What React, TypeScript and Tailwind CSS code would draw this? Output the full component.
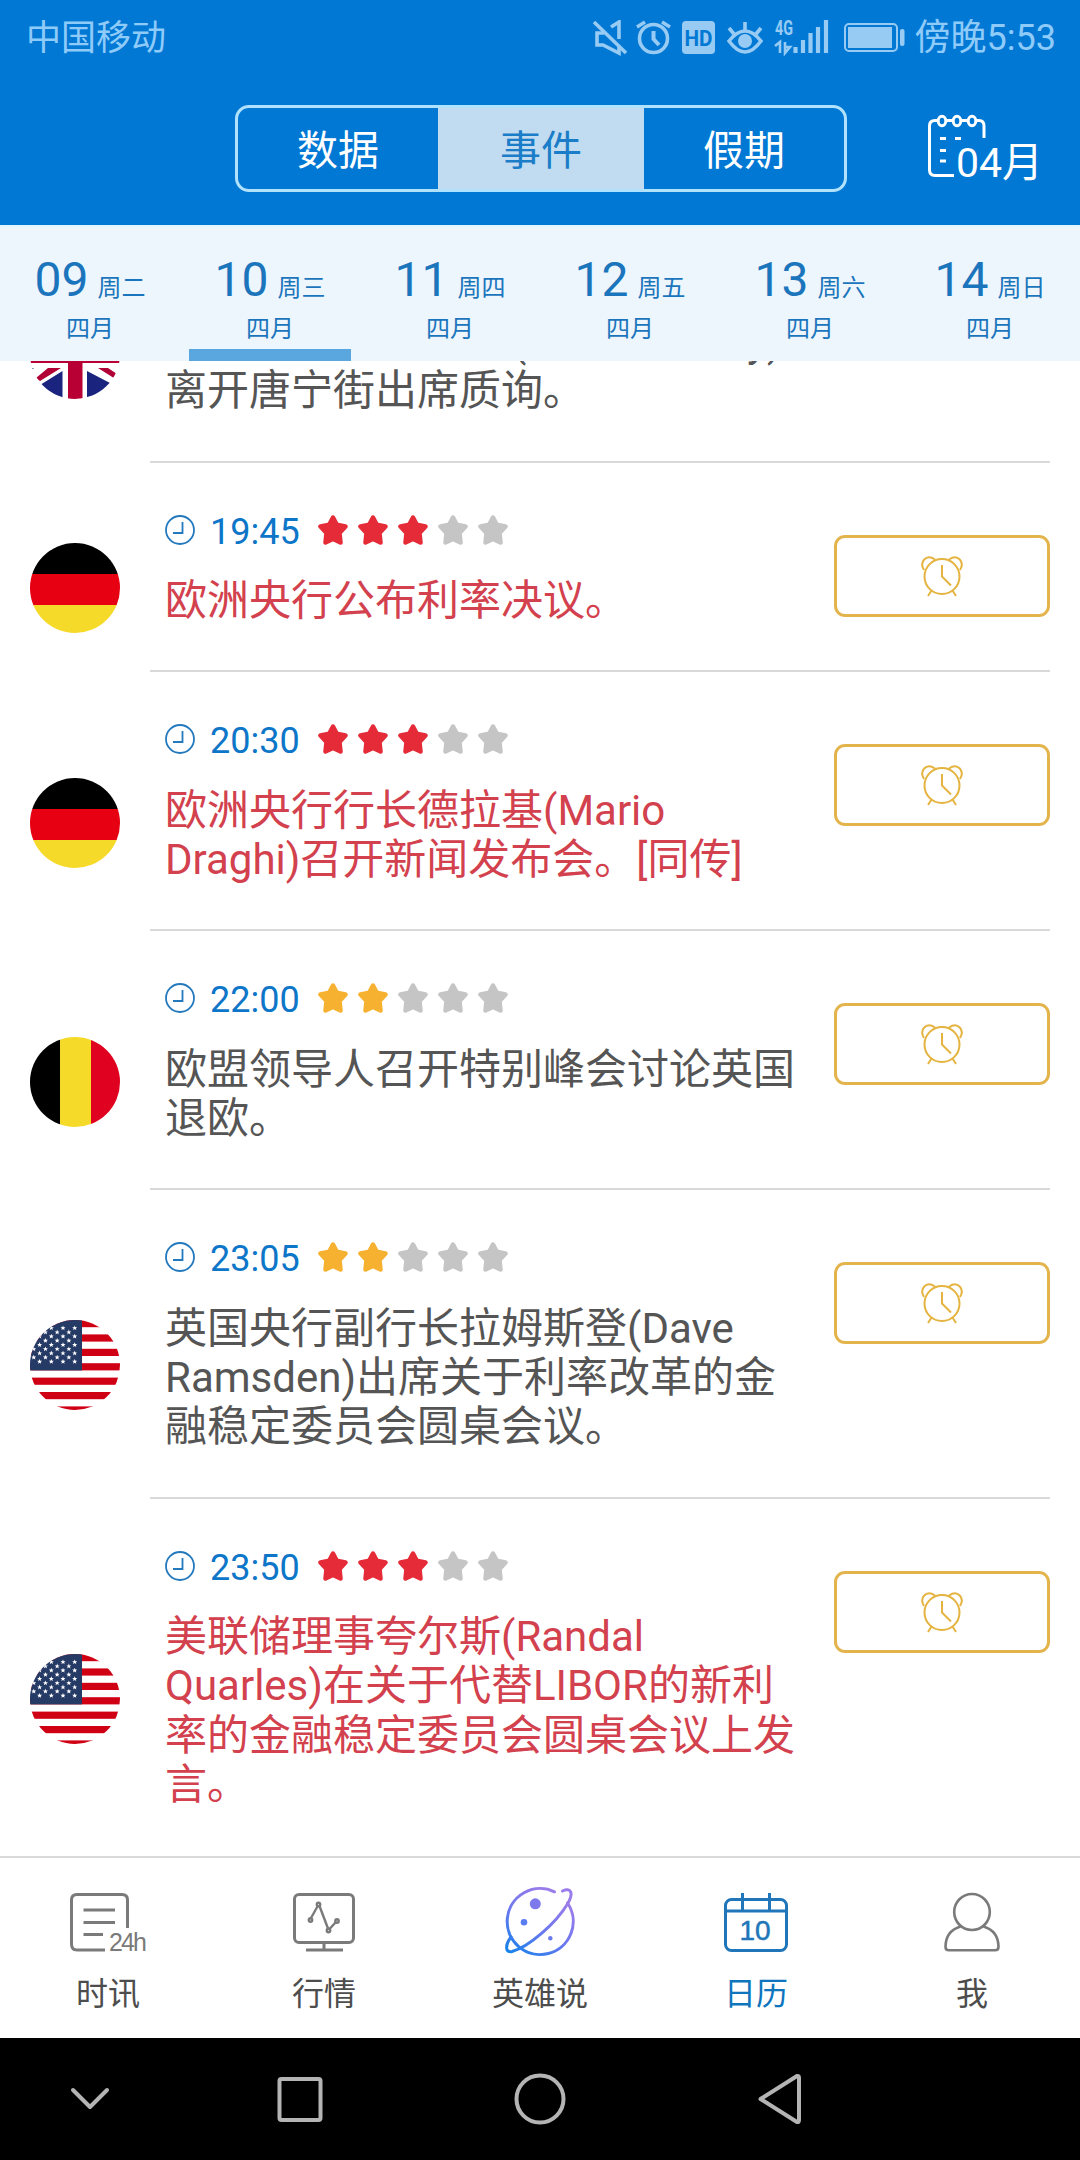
import type { ReactNode } from "react";

type Flag = "uk" | "de" | "be" | "us";

type EventItem = {
  flag: Flag;
  time: string;
  stars: number;
  important: boolean;
  lines: string[];
};

const days = [
  { day: "09", week: "周二" },
  { day: "10", week: "周三" },
  { day: "11", week: "周四" },
  { day: "12", week: "周五" },
  { day: "13", week: "周六" },
  { day: "14", week: "周日" },
];

const events: EventItem[] = [
  { flag: "uk", time: "19:00", stars: 2, important: false, lines: ["英国首相特雷莎·梅(Theresa May)", "离开唐宁街出席质询。"] },
  { flag: "de", time: "19:45", stars: 3, important: true, lines: ["欧洲央行公布利率决议。"] },
  { flag: "de", time: "20:30", stars: 3, important: true, lines: ["欧洲央行行长德拉基(Mario", "Draghi)召开新闻发布会。[同传]"] },
  { flag: "be", time: "22:00", stars: 2, important: false, lines: ["欧盟领导人召开特别峰会讨论英国", "退欧。"] },
  { flag: "us", time: "23:05", stars: 2, important: false, lines: ["英国央行副行长拉姆斯登(Dave", "Ramsden)出席关于利率改革的金", "融稳定委员会圆桌会议。"] },
  { flag: "us", time: "23:50", stars: 3, important: true, lines: ["美联储理事夸尔斯(Randal", "Quarles)在关于代替LIBOR的新利", "率的金融稳定委员会圆桌会议上发", "言。"] },
];

function StatusBar() {
  return (
    <div className="flex h-[75px] items-center justify-between pl-[26px] pr-[24px] text-[35px] text-[#8fcbf9]">
      <span className="pt-[2px] leading-[73px]">中国移动</span>
      <div className="flex items-center">
        <svg className="h-[36px] w-[320px]" viewBox="592 19 320 36" fill="none" stroke="#97cbf3" strokeWidth="3">
          {/* muted speaker */}
          <path d="M594 21 L626 52" strokeWidth="3.6" />
          <path d="M611 26 L619 21 V38" strokeWidth="3.6" />
          <path d="M604 32 H597 V44 H603 L619 52 V46" strokeWidth="3.6" />
          {/* alarm */}
          <circle cx="653.5" cy="37.5" r="14" strokeWidth="3.6" />
          <path d="M653.5 30 V38 L659 44" strokeWidth="4" />
          <path d="M637 26 L645 21 M670 26 L662 21" strokeWidth="3.4" />
          {/* HD badge */}
          <rect x="682" y="20" width="33" height="33" rx="4" fill="#97cbf3" stroke="none" />
          <text x="698.5" y="44.500" textAnchor="middle" fill="#0178d4" stroke="none" textLength="28" lengthAdjust="spacingAndGlyphs" className="font-['Roboto'] text-[22px] font-bold">HD</text>
          {/* eye comfort */}
          <path d="M729 40 Q745 20 761 40 Q745 62 729 40 Z" strokeWidth="3.6" />
          <circle cx="745" cy="40" r="7" fill="#97cbf3" stroke="none" />
          <path d="M745 21 V30 M729 27 L734 33 M761 27 L756 33" strokeWidth="3.6" />
          {/* network */}
          <text x="775" y="34" fill="#97cbf3" stroke="none" textLength="18" lengthAdjust="spacingAndGlyphs" className="font-['Roboto'] text-[20px] font-bold">4G</text>
          <path d="M775 45 L780 41 V52 M785 41 V52 L790 46 H785" strokeWidth="2.6" />
          <path d="M795.5 46 V52 M803 39 V52 M810.500 32 V52 M818 26 V52 M826 19 V52" strokeWidth="4.2" />
          {/* battery */}
          <rect x="845" y="23" width="52" height="27" rx="4" strokeWidth="2" />
          <rect x="848" y="26" width="44" height="21" fill="#97cbf3" stroke="none" />
          <rect x="900" y="28" width="4.500" height="17" rx="2" fill="#97cbf3" stroke="none" />
        </svg>
        <span className="ml-[3px] pt-[2px] text-[36px] leading-[73px]">傍晚5:53</span>
      </div>
    </div>
  );
}

function Header() {
  return (
    <div className="flex h-[150px] items-start justify-end pr-[37px] pt-[30px]">
      <div className="mr-[80px] grid h-[87px] w-[612px] grid-cols-[200px_206px_200px] overflow-hidden rounded-[14px] border-[3px] border-[#b0e2fd] text-center text-[41px] leading-[87px] text-white">
        <span>数据</span>
        <span className="bg-[#c1dcf0] text-[#1b7cc8]">事件</span>
        <span>假期</span>
      </div>
      <div className="flex pt-[9px] text-white">
        <svg className="h-[64px] w-[59px]" viewBox="0 0 59 64" fill="none" stroke="white" strokeWidth="3">
          <path d="M27 61.500 H8 Q2.500 61.500 2.500 56 V12 Q2.500 6.500 8 6.500 H10 M20 6.500 H25 M35 6.500 H40 M50 6.500 H52 Q57 6.500 57 12 V24" />
          <ellipse cx="15" cy="7" rx="3.800" ry="4.800" />
          <ellipse cx="30" cy="7" rx="3.800" ry="4.800" />
          <ellipse cx="45" cy="7" rx="3.800" ry="4.800" />
          <path d="M13 24.500 H19 M28 24.500 H34 M13 36.500 H19 M13 47 H19" />
        </svg>
        <span className="-ml-[30px] mt-[24px] text-[41px] leading-[50px]">04月</span>
      </div>
    </div>
  );
}

function DateStrip() {
  return (
    <div className="grid h-[136px] grid-cols-6 border-t-2 border-[#dff6ff] bg-[#eef6fd] text-[#1b75bc]">
      {days.map((d) => (
        <div key={d.day} className="flex flex-col items-center">
          <div className="mt-[26px] flex h-[54px] items-baseline leading-[54px]">
            <span className="text-[48px]">{d.day}</span>
            <span className="ml-[9px] text-[24px]">{d.week}</span>
          </div>
          <div className="mt-[5px] text-[24px] leading-[34px]">四月</div>
          {d.day === "10" && <div className="mt-auto h-[12px] w-[162px] bg-[#5aa6df]" />}
        </div>
      ))}
    </div>
  );
}

function FlagIcon({ flag }: { flag: Flag }) {
  const ukHalf = (
    <>
      <path d="M32.500 62 V90 H20 L10 76 Z M57 62 V90 H72 L81 74.500 Z M0 59 H4 L0 62 Z" fill="#1a237e" />
      <path d="M18 59 H31 L10 72 L6 69 Z M68 59 H78 L90 67 L87 71 Z" fill="#b00035" />
    </>
  );
  return (
    <svg className="size-[90px] rounded-full" viewBox="0 0 90 90">
      {flag === "de" && (
        <>
          <rect width="90" height="31" fill="#000" />
          <rect y="31" width="90" height="31" fill="#e60012" />
          <rect y="62" width="90" height="28" fill="#f6da29" />
        </>
      )}
      {flag === "be" && (
        <>
          <rect width="30" height="90" fill="#000" />
          <rect x="30" width="31" height="90" fill="#f6da29" />
          <rect x="61" width="29" height="90" fill="#e0001f" />
        </>
      )}
      {flag === "us" && (
        <>
          <rect width="90" height="90" fill="#fff" />
          {[0, 1, 2, 3, 4, 5, 6].map((i) => (
            <rect key={i} y={i * 14.4} width="90" height="7.2" fill="#d00014" />
          ))}
          <rect width="52" height="50.400" fill="#263a66" />
          {Array.from({ length: 9 }, (_, row) =>
            [0, 1, 2, 3].map((col) => (
              <path
                key={`${row}-${col}`}
                transform={`translate(${44.7 - col * 11.7 - (row % 2) * 5.85} ${8 + row * 4.2})`}
                d="M0 -2.600 L.7 -.8 L2.500 -.8 L1.100 .4 L1.600 2.200 L0 1.100 L-1.600 2.200 L-1.100 .4 L-2.500 -.8 L-.7 -.8 Z"
                fill="#fff"
              />
            )),
          )}
        </>
      )}
      {flag === "uk" && (
        <>
          <rect width="90" height="90" fill="#fff" />
          {ukHalf}
          <g transform="rotate(180 45 45)">{ukHalf}</g>
          <path d="M38 0 H52.500 V90 H38 Z M0 36 H90 V54 H0 Z" fill="#b90034" />
        </>
      )}
    </svg>
  );
}

function Star({ color }: { color: string }) {
  return (
    <svg className="size-[30px]" viewBox="0 0 30 30">
      <path
        d="M15 2.500 L18.800 9.800 L27.500 11.500 L21.500 18 L22.500 27.500 L15 24 L7.500 27.500 L8.500 18 L2.500 11.500 L11.200 9.800 Z"
        fill={color}
        stroke={color}
        strokeWidth="4.500"
        strokeLinejoin="round"
      />
    </svg>
  );
}

function EventRow({ item, last }: { item: EventItem; last: boolean }) {
  const starColor = item.important ? "#e52b38" : "#f7b131";
  return (
    <div className="flex shrink-0 pl-[30px] pr-[30px]">
      <div className={`flex w-[120px] items-center pt-[43px] ${last ? "" : "pb-px"}`}>
        <FlagIcon flag={item.flag} />
      </div>
      <div className={`flex flex-1 items-start justify-between border-b-2 pb-[45px] pl-[15px] pt-[43px] ${last ? "border-transparent" : "border-[#d9d9d9]"}`}>
        <div>
          <div className="flex h-[52px] items-center">
            <svg className="mb-[4px] size-[30px]" viewBox="0 0 30 30" fill="none" stroke="#2279bd" strokeWidth="1.800">
              <circle cx="15" cy="15" r="14" />
              <path d="M17.500 7 V18 H8" />
            </svg>
            <span className="ml-[15px] w-[108px] text-[36px] leading-[52px] text-[#0d76c8]">{item.time}</span>
            <div className="mb-[4px] flex gap-[10px]">
              {[1, 2, 3, 4, 5].map((n) => (
                <Star key={n} color={n <= item.stars ? starColor : "#c5c5c5"} />
              ))}
            </div>
          </div>
          <div className={`mt-[18.600px] whitespace-nowrap text-[42px] leading-[49.200px] ${item.important ? "text-[#d2414d]" : "text-[#555555]"}`}>
            {item.lines.map((line) => (
              <div key={line}>{line}</div>
            ))}
          </div>
        </div>
        <button className="mt-[29px] flex h-[82px] w-[216px] shrink-0 items-center justify-center rounded-[11px] border-[3px] border-[#e3b44c]">
          <svg className="h-[42px] w-[44px]" viewBox="0 0 44 42" fill="none" stroke="#e5b440" strokeWidth="2">
            <circle cx="22" cy="21.500" r="17.500" />
            <path d="M22 10 V21.500 L31 30.500" />
            <path d="M4 15 C-1 7 6 -1.500 15 4.500 M40 15 C45 7 38 -1.500 29 4.500" />
            <path d="M11.500 35.500 L8 41 M32.500 35.500 L36 41" />
          </svg>
        </button>
      </div>
    </div>
  );
}

function TabItem({ label, active, children }: { label: string; active?: boolean; children: ReactNode }) {
  return (
    <div className={`flex flex-col items-center pt-[29px] ${active ? "text-[#0f75bd]" : "text-[#4d4d4d]"}`}>
      <svg className="h-[70px] w-[90px]" viewBox="0 0 90 70" fill="none" strokeWidth="3">
        {children}
      </svg>
      <span className="mt-[14px] text-[32px] leading-[46px]">{label}</span>
    </div>
  );
}

function TabBar() {
  return (
    <div className="grid h-[182px] grid-cols-5 border-t-2 border-[#dadada] bg-white">
      <TabItem label="时讯">
        <path d="M42 63 H14 Q8.500 63 8.500 57 V13 Q8.500 7.500 14 7.500 H59 Q64.500 7.500 64.500 13 V41" stroke="#7a7a7a" />
        <path d="M20.500 23 H52 M20.500 35.500 H52 M20.500 47.500 H40" stroke="#7a7a7a" />
        <text x="46" y="64" fill="#7a7a7a" textLength="38" className="font-['Liberation_Sans'] text-[25px]">24h</text>
      </TabItem>
      <TabItem label="行情">
        <rect x="15.500" y="7.500" width="59" height="48" rx="4.500" stroke="#7a7a7a" />
        <path d="M45 56 V63 M27 63 H64" stroke="#7a7a7a" />
        <g stroke="#7a7a7a" strokeWidth="2.400">
          <path d="M32 31 L39 18.500 M40.500 19 L49 41.500 M50.500 42 L56.500 35.500" />
          <circle cx="31.500" cy="33" r="1.700" />
          <circle cx="39.500" cy="17.500" r="1.700" />
          <circle cx="49.500" cy="43.500" r="1.700" />
          <circle cx="58" cy="34" r="1.700" />
        </g>
      </TabItem>
      <TabItem label="英雄说">
        <defs>
          <linearGradient id="planet" x1="10" y1="66" x2="50" y2="4" gradientUnits="userSpaceOnUse">
            <stop offset="0" stopColor="#1084ea" />
            <stop offset="0.5" stopColor="#6878ee" />
            <stop offset="1" stopColor="#9a7cea" />
          </linearGradient>
        </defs>
        <g stroke="url(#planet)" strokeLinecap="round">
          <path d="M59.500 4.800 A33 33 0 1 0 72.500 16" />
          <path d="M67.500 4 C76 0 79 6 72.500 17 C61 36 34 60 17 64.500 C10 66 10 58 16 50" />
        </g>
        <circle cx="40.300" cy="16.800" r="5.500" fill="#7d79ec" />
        <circle cx="29" cy="35.200" r="3.300" fill="#5a7df0" />
        <circle cx="55.300" cy="51.200" r="2.200" fill="#6a7bee" />
      </TabItem>
      <TabItem label="日历" active>
        <rect x="14.500" y="12.500" width="61" height="51" rx="6" stroke="#2076b8" />
        <path d="M14.500 24 H75.500 M31.500 6 V24 M58.500 6 V24" stroke="#2076b8" />
        <text x="44" y="52.500" textAnchor="middle" fill="#2076b8" stroke="#2076b8" strokeWidth="0.500" className="font-['Liberation_Sans'] text-[28px]">10</text>
      </TabItem>
      <TabItem label="我">
        <g stroke="#7a7a7a" strokeWidth="2.600">
          <ellipse cx="45" cy="25" rx="17.800" ry="18" />
          <path d="M33.500 39.500 C22 43 18.500 52 18.500 60 Q18.500 63.200 22 63.200 H68 Q71.500 63.200 71.500 60 C71.500 52 68 43 56.500 39.500" />
        </g>
      </TabItem>
    </div>
  );
}

function SystemNav() {
  return (
    <div className="h-[122px] bg-black">
      <svg className="h-[122px] w-full" viewBox="0 0 1080 122" fill="none" stroke="#b4b4b4" strokeWidth="4" strokeLinecap="round" strokeLinejoin="round">
        <path d="M73 52 L90 69 L107 52" />
        <rect x="279.500" y="41" width="41" height="41" rx="2" />
        <circle cx="540" cy="61" r="23.500" />
        <path d="M760.500 61 L797 38 Q799 37.500 799 40 V82 Q799 84.500 797 84 Z" />
      </svg>
    </div>
  );
}

export default function App() {
  return (
    <div className="flex h-[2160px] w-[1080px] flex-col overflow-hidden bg-white font-['Roboto','Noto_Sans_CJK_SC',sans-serif]">
      <div className="bg-[#0178d4]">
        <StatusBar />
        <Header />
      </div>
      <DateStrip />
      <div className="flex h-[1495px] flex-col justify-end overflow-hidden bg-white">
        {events.map((item, i) => (
          <EventRow key={item.time} item={item} last={i === events.length - 1} />
        ))}
      </div>
      <TabBar />
      <SystemNav />
    </div>
  );
}
